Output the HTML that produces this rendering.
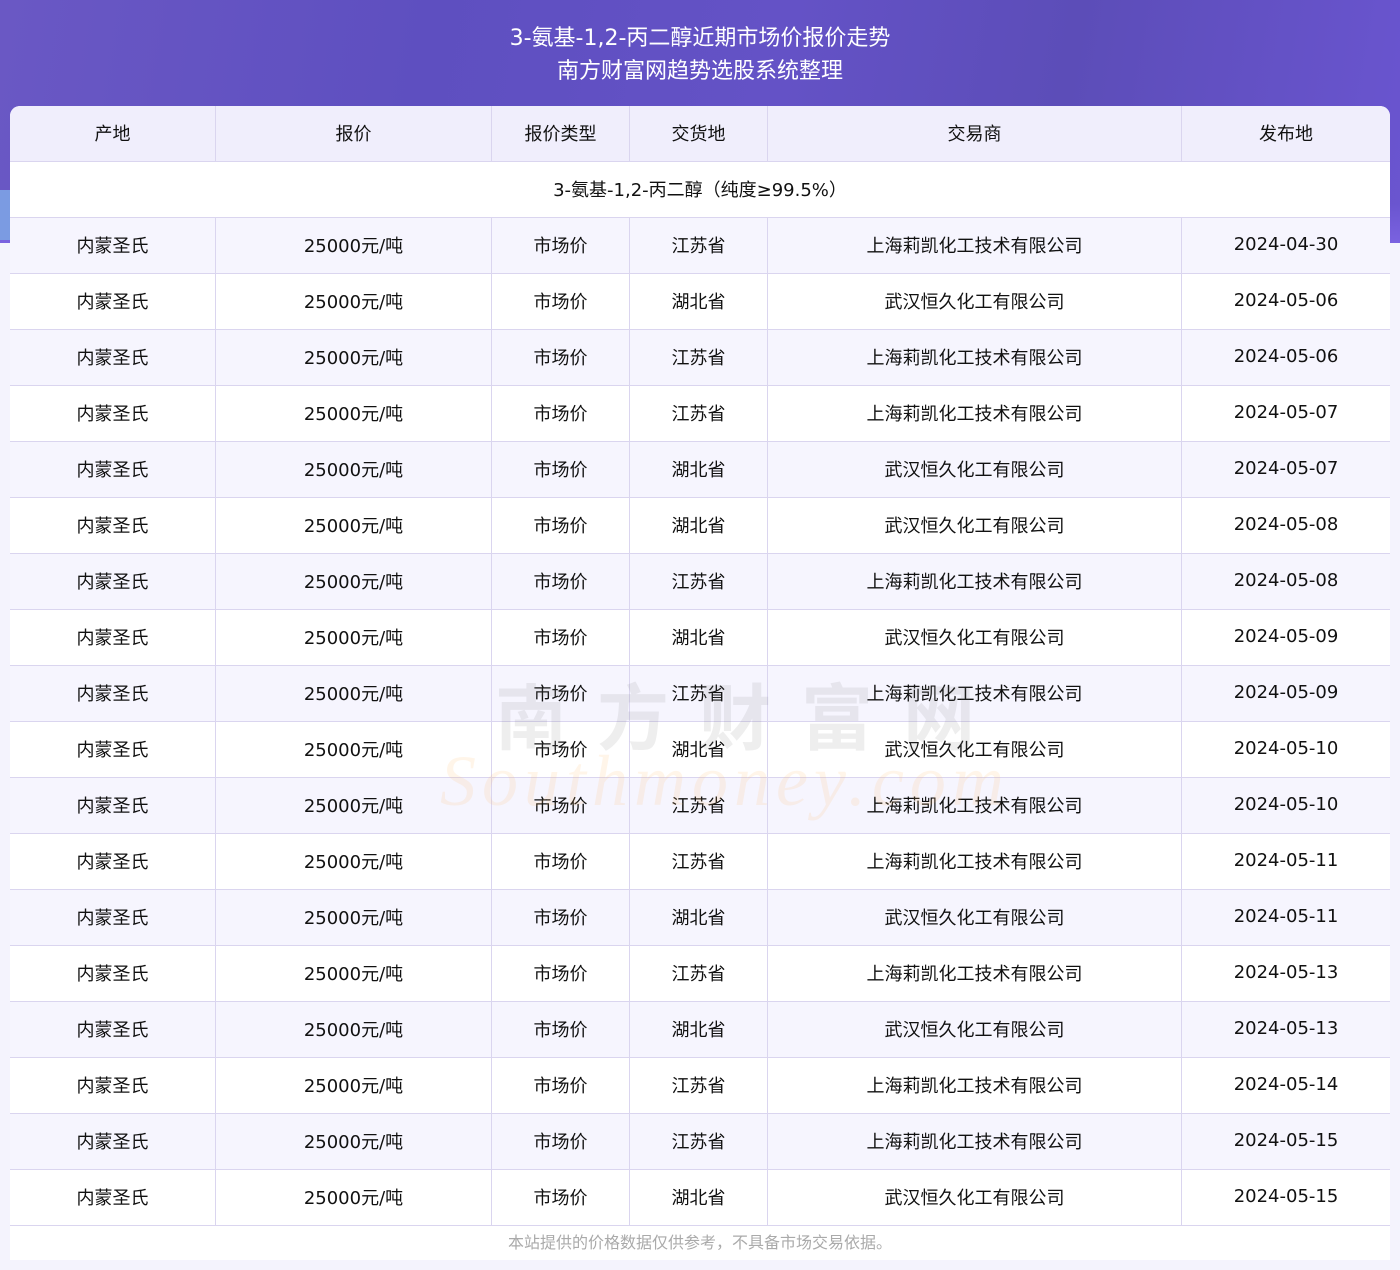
<!DOCTYPE html>
<html><head><meta charset="utf-8"><style>
*{margin:0;padding:0;box-sizing:border-box}
body{width:1400px;height:1270px;background:#f4f3fd;font-family:"DejaVu Sans","Noto Sans CJK SC",sans-serif;position:relative;overflow:hidden}
.hero{position:absolute;left:0;top:0;width:1400px;height:243px;background:linear-gradient(100deg,#6a58c4 0%,#5e4fc0 30%,#6452c6 55%,#5c4db8 75%,#6a55d0 100%);}
.hero:after{content:"";position:absolute;left:0;bottom:0;width:1400px;height:40px;background:linear-gradient(180deg,rgba(120,100,230,0) 0,#7a62e0 100%)}
.bl{position:absolute;left:0;top:190px;width:12px;height:50px;background:#7b9be2}
.t{position:absolute;left:0;width:1400px;text-align:center;color:#fff;font-size:22px}
.tbl{position:absolute;left:10px;top:106px;width:1380px;background:#fff;border-radius:10px 10px 0 0;overflow:hidden}
.r{display:flex;height:56px;border-bottom:1px solid #dad5ef}
.r div{display:flex;align-items:center;justify-content:center;border-right:1px solid #dad5ef;font-size:18px;color:#111;height:100%;padding-bottom:2px}
.r div:last-child{border-right:none}
.c1{width:206px}.c2{width:276px}.c3{width:138px}.c4{width:138px}.c5{width:414px}.c6{width:208px}
.h{background:#f0eefc}
.o{background:#f6f5fe}
.foot{position:absolute;left:10px;top:1226px;width:1380px;height:34px;background:#fff;color:#aaa;font-size:16px;text-align:center;line-height:34px}
.wm{position:absolute;left:495px;top:660px;font-size:72px;color:rgba(120,120,120,0.13);letter-spacing:30px;font-weight:bold}
.wm2{position:absolute;left:440px;top:740px;font-size:72px;color:rgba(255,190,110,0.15);font-family:"Liberation Serif",serif;font-style:italic;letter-spacing:6px}
</style></head><body>
<div class="hero"></div><div class="bl"></div>
<div class="t" style="top:20px">3-氨基-1,2-丙二醇近期市场价报价走势</div>
<div class="t" style="top:53px">南方财富网趋势选股系统整理</div>
<div class="tbl">
<div class="r h"><div class="c1">产地</div><div class="c2">报价</div><div class="c3">报价类型</div><div class="c4">交货地</div><div class="c5">交易商</div><div class="c6">发布地</div></div>
<div class="r"><div style="width:1380px">3-氨基-1,2-丙二醇（纯度≥99.5%）</div></div>
<div class="r o"><div class="c1">内蒙圣氏</div><div class="c2">25000元/吨</div><div class="c3">市场价</div><div class="c4">江苏省</div><div class="c5">上海莉凯化工技术有限公司</div><div class="c6">2024-04-30</div></div>
<div class="r"><div class="c1">内蒙圣氏</div><div class="c2">25000元/吨</div><div class="c3">市场价</div><div class="c4">湖北省</div><div class="c5">武汉恒久化工有限公司</div><div class="c6">2024-05-06</div></div>
<div class="r o"><div class="c1">内蒙圣氏</div><div class="c2">25000元/吨</div><div class="c3">市场价</div><div class="c4">江苏省</div><div class="c5">上海莉凯化工技术有限公司</div><div class="c6">2024-05-06</div></div>
<div class="r"><div class="c1">内蒙圣氏</div><div class="c2">25000元/吨</div><div class="c3">市场价</div><div class="c4">江苏省</div><div class="c5">上海莉凯化工技术有限公司</div><div class="c6">2024-05-07</div></div>
<div class="r o"><div class="c1">内蒙圣氏</div><div class="c2">25000元/吨</div><div class="c3">市场价</div><div class="c4">湖北省</div><div class="c5">武汉恒久化工有限公司</div><div class="c6">2024-05-07</div></div>
<div class="r"><div class="c1">内蒙圣氏</div><div class="c2">25000元/吨</div><div class="c3">市场价</div><div class="c4">湖北省</div><div class="c5">武汉恒久化工有限公司</div><div class="c6">2024-05-08</div></div>
<div class="r o"><div class="c1">内蒙圣氏</div><div class="c2">25000元/吨</div><div class="c3">市场价</div><div class="c4">江苏省</div><div class="c5">上海莉凯化工技术有限公司</div><div class="c6">2024-05-08</div></div>
<div class="r"><div class="c1">内蒙圣氏</div><div class="c2">25000元/吨</div><div class="c3">市场价</div><div class="c4">湖北省</div><div class="c5">武汉恒久化工有限公司</div><div class="c6">2024-05-09</div></div>
<div class="r o"><div class="c1">内蒙圣氏</div><div class="c2">25000元/吨</div><div class="c3">市场价</div><div class="c4">江苏省</div><div class="c5">上海莉凯化工技术有限公司</div><div class="c6">2024-05-09</div></div>
<div class="r"><div class="c1">内蒙圣氏</div><div class="c2">25000元/吨</div><div class="c3">市场价</div><div class="c4">湖北省</div><div class="c5">武汉恒久化工有限公司</div><div class="c6">2024-05-10</div></div>
<div class="r o"><div class="c1">内蒙圣氏</div><div class="c2">25000元/吨</div><div class="c3">市场价</div><div class="c4">江苏省</div><div class="c5">上海莉凯化工技术有限公司</div><div class="c6">2024-05-10</div></div>
<div class="r"><div class="c1">内蒙圣氏</div><div class="c2">25000元/吨</div><div class="c3">市场价</div><div class="c4">江苏省</div><div class="c5">上海莉凯化工技术有限公司</div><div class="c6">2024-05-11</div></div>
<div class="r o"><div class="c1">内蒙圣氏</div><div class="c2">25000元/吨</div><div class="c3">市场价</div><div class="c4">湖北省</div><div class="c5">武汉恒久化工有限公司</div><div class="c6">2024-05-11</div></div>
<div class="r"><div class="c1">内蒙圣氏</div><div class="c2">25000元/吨</div><div class="c3">市场价</div><div class="c4">江苏省</div><div class="c5">上海莉凯化工技术有限公司</div><div class="c6">2024-05-13</div></div>
<div class="r o"><div class="c1">内蒙圣氏</div><div class="c2">25000元/吨</div><div class="c3">市场价</div><div class="c4">湖北省</div><div class="c5">武汉恒久化工有限公司</div><div class="c6">2024-05-13</div></div>
<div class="r"><div class="c1">内蒙圣氏</div><div class="c2">25000元/吨</div><div class="c3">市场价</div><div class="c4">江苏省</div><div class="c5">上海莉凯化工技术有限公司</div><div class="c6">2024-05-14</div></div>
<div class="r o"><div class="c1">内蒙圣氏</div><div class="c2">25000元/吨</div><div class="c3">市场价</div><div class="c4">江苏省</div><div class="c5">上海莉凯化工技术有限公司</div><div class="c6">2024-05-15</div></div>
<div class="r"><div class="c1">内蒙圣氏</div><div class="c2">25000元/吨</div><div class="c3">市场价</div><div class="c4">湖北省</div><div class="c5">武汉恒久化工有限公司</div><div class="c6">2024-05-15</div></div>
</div>
<div class="wm">南方财富网</div>
<div class="wm2">Southmoney.com</div>
<div class="foot">本站提供的价格数据仅供参考，不具备市场交易依据。</div>
</body></html>
